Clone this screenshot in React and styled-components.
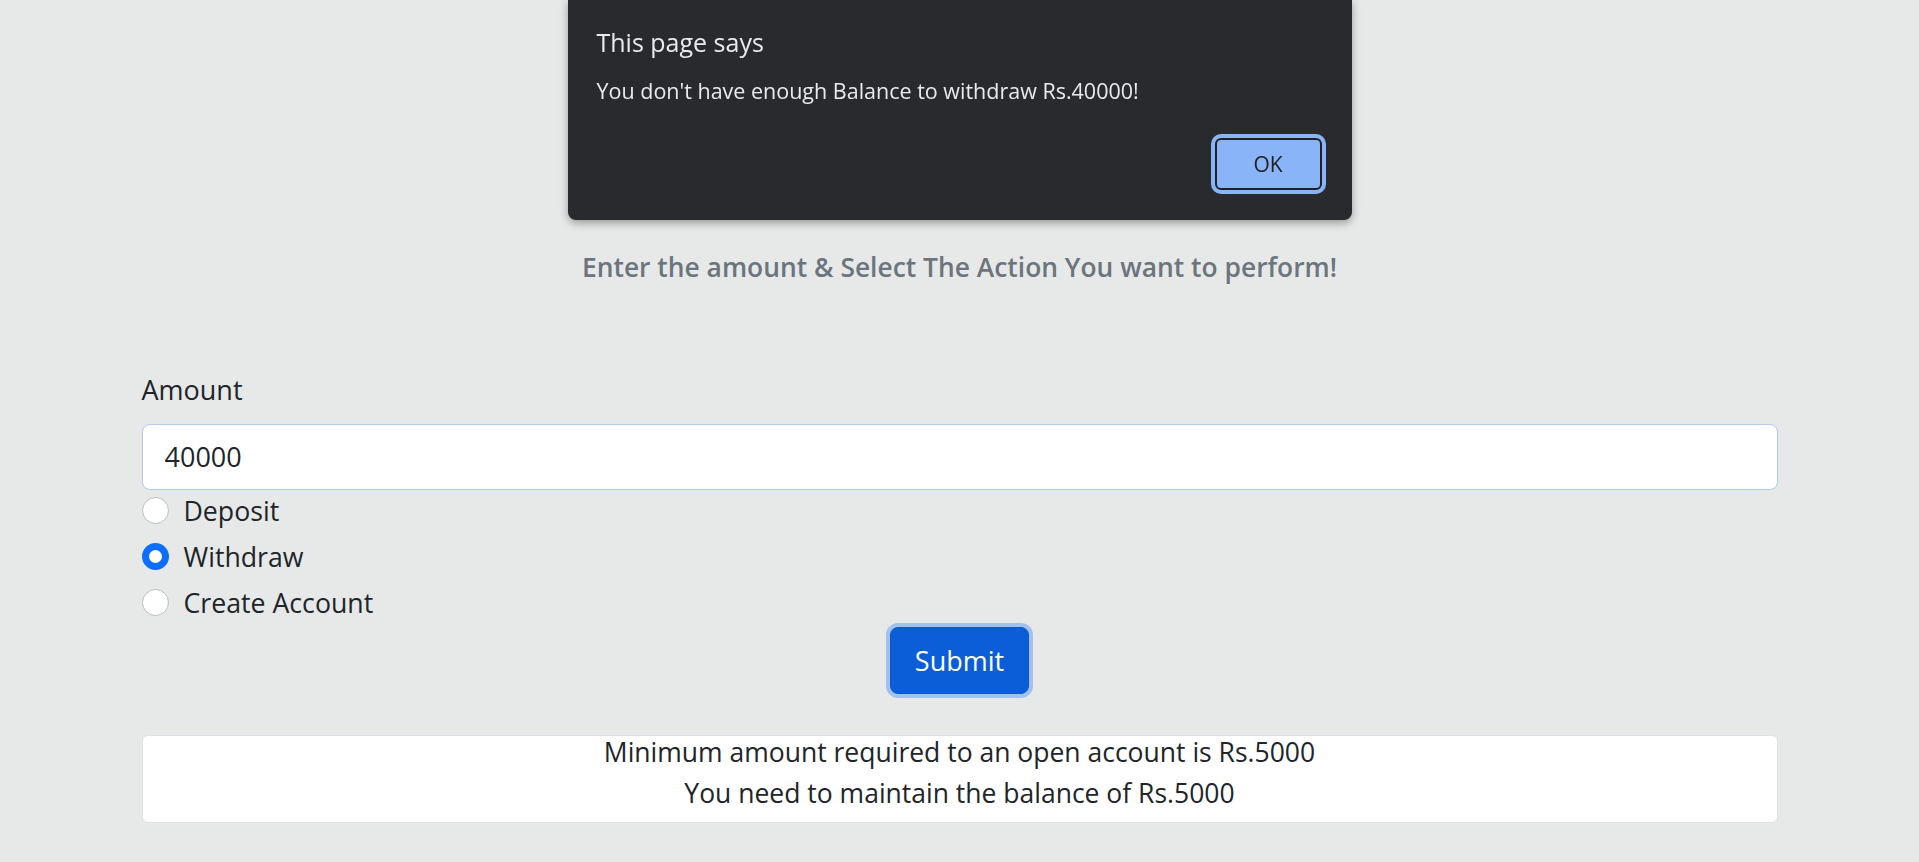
import React, { useState } from 'react';
import styled, { createGlobalStyle } from 'styled-components';

const GlobalStyle = createGlobalStyle`
  html, body {
    margin: 0;
    padding: 0;
    background: #e7e9e8;
    font-family: "Open Sans", "Noto Sans", sans-serif;
    color: #212529;
  }
  * { box-sizing: border-box; }
`;

const Page = styled.div`
  width: 1636px;
  margin: 0 auto;
  padding-top: 252px;
  padding-bottom: 40px;
`;

const Heading = styled.h5`
  margin: 0 0 85px;
  text-align: center;
  font-size: 26.4px;
  line-height: 1.2;
  font-weight: 600;
  color: #6c757d;
`;

const Label = styled.label`
  display: block;
  font-size: 27px;
  line-height: 42px;
  margin-bottom: 13px;
`;

const AmountInput = styled.input`
  display: block;
  width: 100%;
  height: 66px;
  padding: 0 22px;
  font-family: inherit;
  font-size: 27px;
  color: #212529;
  background: #fff;
  border: 1px solid #b3caec;
  border-radius: 8px;
  outline: none;
`;

const Options = styled.div`
  display: flex;
  flex-direction: column;
  gap: 4px;
`;

const Option = styled.label`
  display: flex;
  align-items: center;
  gap: 15px;
  font-size: 26.7px;
  line-height: 42px;
  cursor: pointer;
`;

const Radio = styled.input`
  appearance: none;
  margin: 0;
  width: 27px;
  height: 27px;
  border-radius: 50%;
  background: #fff;
  border: 1px solid #bdbdbd;
  flex-shrink: 0;
  &:checked {
    background: #fff;
    border: 7px solid #0d6efd;
  }
`;

const Actions = styled.div`
  display: flex;
  justify-content: center;
  margin-top: 3px;
`;

const SubmitButton = styled.button`
  height: 67px;
  padding: 0 24px;
  font-family: inherit;
  font-size: 27px;
  color: #fff;
  background: #0b5ed7;
  border: 1px solid #0a58ca;
  border-radius: 8px;
  box-shadow: 0 0 0 4px #a3c1ee;
  cursor: pointer;
`;

const InfoBox = styled.div`
  margin-top: 41px;
  background: #fff;
  border: 1px solid #dee2e6;
  border-radius: 6px;
  padding-bottom: 4px;
  text-align: center;
`;

const InfoLine = styled.div`
  font-size: 26.5px;
  line-height: 33px;
  margin-bottom: 8px;
`;

const Dialog = styled.div`
  position: fixed;
  top: 0;
  left: 50%;
  transform: translateX(-50%);
  width: 784px;
  height: 220px;
  padding: 23px 30px 30px 29px;
  background: #292a2d;
  border-radius: 0 0 8px 8px;
  box-shadow: 0 3px 8px rgba(0, 0, 0, 0.35);
  display: flex;
  flex-direction: column;
  font-family: "Open Sans", "Noto Sans", sans-serif;
`;

const DialogTitle = styled.div`
  font-size: 25px;
  line-height: 38px;
  color: #e8eaed;
`;

const DialogMessage = styled.div`
  margin-top: 16px;
  font-size: 21.5px;
  line-height: 28px;
  color: #e8eaed;
`;

const DialogFooter = styled.div`
  margin-top: auto;
  display: flex;
  justify-content: flex-end;
`;

const OkButton = styled.button`
  width: 107px;
  height: 52px;
  font-family: inherit;
  font-size: 21px;
  color: #202124;
  background: #8ab4f8;
  border: 2px solid #202124;
  border-radius: 6px;
  box-shadow: 0 0 0 4px #8ab4f8;
  cursor: pointer;
`;

const actions = ['Deposit', 'Withdraw', 'Create Account'];

export default function App() {
  const [amount, setAmount] = useState('40000');
  const [action, setAction] = useState('Withdraw');

  return (
    <>
      <GlobalStyle />
      <Page>
        <Heading>Enter the amount &amp; Select The Action You want to perform!</Heading>
        <Label htmlFor="amount">Amount</Label>
        <AmountInput id="amount" value={amount} onChange={e => setAmount(e.target.value)} />
        <Options>
          {actions.map(a => (
            <Option key={a}>
              <Radio type="radio" name="action" checked={action === a} onChange={() => setAction(a)} />
              {a}
            </Option>
          ))}
        </Options>
        <Actions>
          <SubmitButton>Submit</SubmitButton>
        </Actions>
        <InfoBox>
          <InfoLine>Minimum amount required to an open account is Rs.5000</InfoLine>
          <InfoLine>You need to maintain the balance of Rs.5000</InfoLine>
        </InfoBox>
      </Page>
      <Dialog role="alertdialog">
        <DialogTitle>This page says</DialogTitle>
        <DialogMessage>You don't have enough Balance to withdraw Rs.40000!</DialogMessage>
        <DialogFooter>
          <OkButton>OK</OkButton>
        </DialogFooter>
      </Dialog>
    </>
  );
}
